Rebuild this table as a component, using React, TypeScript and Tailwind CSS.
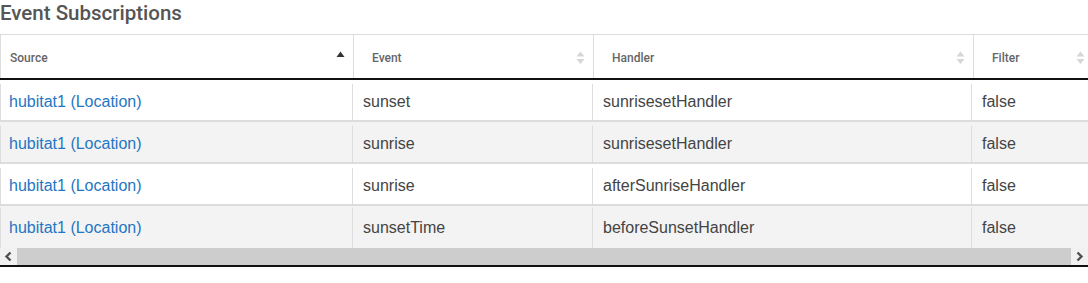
import React from "react";

type Sub = { source: string; event: string; handler: string; filter: string };

const subs: Sub[] = [
  { source: "hubitat1 (Location)", event: "sunset", handler: "sunrisesetHandler", filter: "false" },
  { source: "hubitat1 (Location)", event: "sunrise", handler: "sunrisesetHandler", filter: "false" },
  { source: "hubitat1 (Location)", event: "sunrise", handler: "afterSunriseHandler", filter: "false" },
  { source: "hubitat1 (Location)", event: "sunsetTime", handler: "beforeSunsetHandler", filter: "false" },
];

function SortBoth() {
  return (
    <svg width="9" height="14" viewBox="0 0 9 14" className="shrink-0">
      <path d="M4.5 0.5 L8.5 5.5 L0.5 5.5 Z" fill="#d6d6d6" />
      <path d="M0.5 8 L8.5 8 L4.5 13 Z" fill="#d6d6d6" />
    </svg>
  );
}

function SortAsc() {
  return (
    <svg width="9" height="14" viewBox="0 0 9 14" className="shrink-0">
      <path d="M4.5 0.5 L8.5 6 L0.5 6 Z" fill="#333" />
    </svg>
  );
}

function HeadCell({ label, width, pl, asc }: { label: string; width: string; pl: string; asc?: boolean }) {
  return (
    <div className={`${width} ${pl} shrink-0 flex items-center justify-between pr-[8px] pt-[2px] border-l border-[#dddddd]`}>
      <span className="text-[12px] font-medium text-[#666]">{label}</span>
      {asc ? <SortAsc /> : <SortBoth />}
    </div>
  );
}

export default function App() {
  return (
    <div className="w-[1088px] h-[283px] bg-white overflow-hidden font-['Roboto',sans-serif]">
      <div className="h-[34px] pt-[1px] text-[20.5px] leading-6 font-medium text-[#555]">
        Event Subscriptions
      </div>

      <div className="w-[1088px] overflow-hidden">
        {/* header */}
        <div className="flex w-[1100px] h-[46px] border-t border-[#dddddd] border-b-2 border-b-[#111]">
          <HeadCell label="Source" width="w-[353px]" pl="pl-[9px]" asc />
          <HeadCell label="Event" width="w-[240px]" pl="pl-[18px]" />
          <HeadCell label="Handler" width="w-[380px]" pl="pl-[18px]" />
          <HeadCell label="Filter" width="w-[120px]" pl="pl-[18px]" />
        </div>

        {/* body */}
        <div className="font-['Liberation_Sans',Arial,sans-serif] text-[16px] text-[#444]">
          {subs.map((s, i) => (
            <div
              key={i}
              className={`flex w-[1100px] h-[42px] ${
                i === subs.length - 1 ? "pt-[2px]" : "pt-[4px] border-b-2 border-[#dcdcdc]"
              } ${i % 2 === 1 ? "bg-[#f3f3f3]" : "bg-white"}`}
            >
              <div className="w-[352px] shrink-0 flex items-center pl-[8px] border-l border-[#dddddd]">
                <a href="#" className="text-[#1f76c2]">
                  {s.source}
                </a>
              </div>
              <div className="w-[240px] shrink-0 flex items-center pl-[10px] border-l border-[#dddddd]">{s.event}</div>
              <div className="w-[379px] shrink-0 flex items-center pl-[10px] border-l border-[#dddddd]">{s.handler}</div>
              <div className="w-[129px] shrink-0 flex items-center pl-[10px] border-l border-[#dddddd]">{s.filter}</div>
            </div>
          ))}
        </div>

        {/* horizontal scrollbar */}
        <div className="flex h-[19px] bg-[#f1f1f1] border-b-2 border-[#111]">
          <div className="w-[17px] flex items-center justify-center">
            <svg width="9" height="11" viewBox="0 0 9 11">
              <path d="M6.5 1.5 L2.5 5.5 L6.5 9.5" stroke="#505050" strokeWidth="2.4" fill="none" />
            </svg>
          </div>
          <div className="flex-1 bg-[#cdcdcd]" />
          <div className="w-[17px] flex items-center justify-center">
            <svg width="9" height="11" viewBox="0 0 9 11">
              <path d="M2.5 1.5 L6.5 5.5 L2.5 9.5" stroke="#505050" strokeWidth="2.4" fill="none" />
            </svg>
          </div>
        </div>
      </div>
    </div>
  );
}
